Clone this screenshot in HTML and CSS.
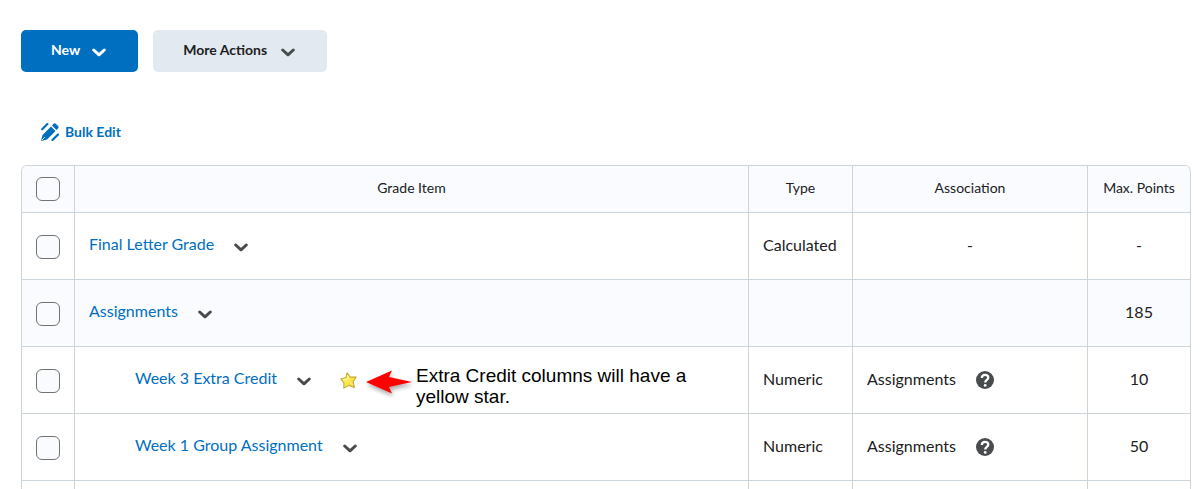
FILE: index.html
```html
<!DOCTYPE html>
<html lang="en">
<head>
<meta charset="utf-8">
<title>Manage Grades</title>
<link rel="stylesheet" href="styles.css">
</head>
<body>
<svg class="defs" aria-hidden="true">
  <symbol id="chevron" viewBox="0 0 14 9"><path d="M1.700 2 7 6.800 12.300 2" fill="none" stroke="currentColor" stroke-width="3" stroke-linecap="round" stroke-linejoin="round"/></symbol>
  <symbol id="help" viewBox="0 0 18 18"><circle cx="9" cy="9" r="9" fill="currentColor"/><path d="M5.800 7C5.800 2.800 12.300 2.900 12.300 6.600 12.300 9 9.200 8.900 9.200 11.600" fill="none" stroke="#fff" stroke-width="2.300"/><circle cx="9.200" cy="14.400" r="1.400" fill="#fff"/></symbol>
</svg>
<main class="page">
  <div class="actions">
    <button class="button button-primary" type="button">New <svg class="chevron"><use href="#chevron"/></svg></button>
    <button class="button" type="button">More Actions <svg class="chevron"><use href="#chevron"/></svg></button>
  </div>
  <button class="bulk-edit" type="button">
    <svg class="pencil" viewBox="0 0 18 18" fill="currentColor" aria-hidden="true">
      <path d="M0 18 1.500 12 10 3.500 14.500 8 6 16.500ZM11 2.500 12.900.600Q14 0 15 .9L17.100 3Q18 4 17.400 5.100L15.500 7Z"/>
      <path d="M1.200 6.200 6.400 1M11.500 17 17 11.500" fill="none" stroke="currentColor" stroke-width="2.200" stroke-linecap="round"/>
      <path d="M1 17 4 14" stroke="#fff" stroke-width=".8"/>
    </svg>
    Bulk Edit
  </button>
  <table class="grades">
    <colgroup><col class="col-select"><col><col class="col-type"><col class="col-association"><col class="col-points"></colgroup>
    <thead>
      <tr><th><input class="check" type="checkbox" aria-label="Select all"></th><th>Grade Item</th><th>Type</th><th>Association</th><th>Max. Points</th></tr>
    </thead>
    <tbody>
      <tr>
        <td><input class="check" type="checkbox" aria-label="Select Final Letter Grade"></td>
        <td><div class="item"><a href="#">Final Letter Grade</a><button class="toggle" type="button" aria-label="Actions for Final Letter Grade"><svg class="chevron"><use href="#chevron"/></svg></button></div></td>
        <td>Calculated</td><td class="center">-</td><td class="center">-</td>
      </tr>
      <tr class="category">
        <td><input class="check" type="checkbox" aria-label="Select Assignments"></td>
        <td><div class="item"><a href="#">Assignments</a><button class="toggle" type="button" aria-label="Actions for Assignments"><svg class="chevron"><use href="#chevron"/></svg></button></div></td>
        <td></td><td></td><td class="center">185</td>
      </tr>
      <tr>
        <td><input class="check" type="checkbox" aria-label="Select Week 3 Extra Credit"></td>
        <td><div class="item child"><a href="#">Week 3 Extra Credit</a><button class="toggle" type="button" aria-label="Actions for Week 3 Extra Credit"><svg class="chevron"><use href="#chevron"/></svg></button>
          <svg class="star" viewBox="0 0 16 16" role="img" aria-label="Extra credit"><defs><linearGradient id="gold" x1="0" y1="0" x2="1" y2="1"><stop offset="0" stop-color="#fff36a"/><stop offset=".5" stop-color="#ffe94e"/><stop offset="1" stop-color="#efc21e"/></linearGradient></defs><path d="M6.600.8 9.600 4.800 15.300 4.700 12.400 9.200 13.500 14.500 8.500 12.600 3.600 15.200 3.700 10.200.7 6.500 5.600 5.200Z" fill="url(#gold)" stroke="#c4a83a" stroke-linejoin="round"/><path d="M6.800 3 8.500 6.200 6 7 3 7.300M9 9 12 12.500" fill="none" stroke="#fffbc0" stroke-width=".8"/></svg>
          <svg class="arrow" viewBox="0 0 48 28" aria-hidden="true"><path d="M1 13 27 1.500 24 8 47 13 24 18 27 24.500Z" fill="#f00"/></svg>
          <span class="note">Extra Credit columns will have a yellow star.</span></div></td>
        <td>Numeric</td>
        <td><div class="association">Assignments<button class="help" type="button" aria-label="Help"><svg class="help-icon"><use href="#help"/></svg></button></div></td>
        <td class="center">10</td>
      </tr>
      <tr>
        <td><input class="check" type="checkbox" aria-label="Select Week 1 Group Assignment"></td>
        <td><div class="item child"><a href="#">Week 1 Group Assignment</a><button class="toggle" type="button" aria-label="Actions for Week 1 Group Assignment"><svg class="chevron"><use href="#chevron"/></svg></button></div></td>
        <td>Numeric</td>
        <td><div class="association">Assignments<button class="help" type="button" aria-label="Help"><svg class="help-icon"><use href="#help"/></svg></button></div></td>
        <td class="center">50</td>
      </tr>
      <tr><td></td><td></td><td></td><td></td><td></td></tr>
    </tbody>
  </table>
</main>
</body>
</html>
```
FILE: styles.css
```css
* { box-sizing: border-box; }
body { margin: 0; background: #fff; color: #202122; font: 16px/24px Lato, sans-serif; }
button { border: 0; padding: 0; background: none; color: inherit; font: inherit; cursor: pointer; }
svg { display: block; flex: none; }
.defs { position: absolute; width: 0; height: 0; }
.page { height: 100vh; overflow: hidden; padding: 30px 9px 0 21px; }
.actions { display: flex; gap: 15px; }
.button { display: flex; align-items: center; gap: 14px; height: 42px; padding: 0 32px 2px 30px; border-radius: 5px; background: #e3e9f1; font-size: 14px; font-weight: 700; line-height: 20px; }
.button-primary { gap: 12px; background: #006fbf; color: #fff; }
.chevron { width: 14px; height: 9px; color: #494c4e; }
.button .chevron { margin-top: 4px; }
.button-primary .chevron { color: #fff; }
.bulk-edit { display: flex; align-items: center; gap: 6px; margin: 48px 0 21px 20px; color: #006fbf; font-size: 14px; font-weight: 700; }
.pencil { width: 18px; height: 18px; }
.grades { width: 100%; table-layout: fixed; border-collapse: separate; border-spacing: 0; border: solid #cdd5dc; border-width: 1px 0 0 1px; border-radius: 6px 6px 0 0; overflow: hidden; }
.col-select { width: 53px; }
.col-type { width: 104px; }
.col-association { width: 235px; }
.col-points { width: 103px; }
th, td { padding: 0 14px 2px; border: solid #cdd5dc; border-width: 0 1px 1px 0; text-align: left; vertical-align: middle; }
th { height: 47px; background: #f9fbff; font-size: 14px; font-weight: 400; text-align: center; }
th:last-child { border-top-right-radius: 6px; }
td { height: 67px; }
.category td { background: #f9fbff; }
.center { text-align: center; }
.check { display: block; appearance: none; width: 24px; height: 24px; margin: 2px 0 0; border: 1px solid #6e7376; border-radius: 6px; background: #f9fbff; }
.check:checked { background: #006fbf; }
td .check { margin-top: 4px; }
.item, .association { display: flex; align-items: center; }
.item a { padding-bottom: 2px; color: #006fbf; text-decoration: none; white-space: nowrap; }
.child { padding-left: 46px; }
.toggle { margin: 4px 0 0 20px; }
.star { width: 17px; height: 17px; margin: 2px 0 0 29px; }
.arrow { width: 48px; height: 28px; margin: 8px 0 0 8px; filter: drop-shadow(1px 3px 2px #0005); }
.note { width: 290px; margin: 14px 0 0 3px; color: #000; font: 19px/21px "Liberation Sans", Arial, sans-serif; }
.association { padding-bottom: 1px; }
.help { margin: 3px 0 0 20px; }
.help-icon { width: 18px; height: 18px; color: #494c4e; }
```
